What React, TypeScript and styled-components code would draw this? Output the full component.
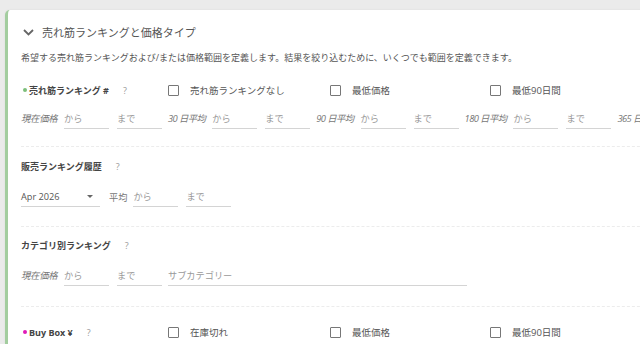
import styled, { createGlobalStyle } from 'styled-components';

const GlobalStyle = createGlobalStyle`
  html, body {
    margin: 0;
    padding: 0;
    background: #ebebeb;
    overflow: hidden;
    font-family: "Open Sans", "Noto Sans CJK JP", sans-serif;
  }
`;

const Page = styled.div`
  padding: 10px 0 0 5px;
  height: 334px;
`;

const Card = styled.div`
  width: 720px;
  height: 100%;
  background: #fff;
  border-left: 3px solid #a3cd9f;
  border-top-left-radius: 5px;
  box-shadow: 0 0 2px rgba(0, 0, 0, 0.08);
  padding-left: 13px;
  box-sizing: border-box;
`;

const Header = styled.div`
  display: flex;
  align-items: center;
  height: 36px;
  padding-top: 4px;
  box-sizing: content-box;
  gap: 8px;
  padding-left: 2px;
`;

const Title = styled.div`
  font-size: 11px;
  color: #555;
`;

const Description = styled.div`
  margin-top: 1px;
  font-size: 9px;
  line-height: 14px;
  color: #555;
`;

const Section = styled.div<{ $top: number; $bottom?: number; $line?: boolean }>`
  padding: ${p => p.$top}px 0 ${p => p.$bottom ?? 0}px;
  border-bottom: ${p => (p.$line ? '1px dashed #ececec' : 'none')};
`;

const FieldHeader = styled.div`
  display: flex;
  align-items: center;
  height: 20px;
`;

const LabelCol = styled.div`
  width: 147px;
  display: flex;
  align-items: center;
`;

const Dot = styled.span<{ $color: string }>`
  width: 4px;
  height: 4px;
  border-radius: 50%;
  background: ${p => p.$color};
  margin: 0 2px 0 2px;
`;

const FieldLabel = styled.span`
  font-size: 9px;
  font-weight: 700;
  color: #444;
`;

const Help = styled.span`
  font-size: 9px;
  color: #999;
  margin-left: 14px;
`;

const CheckGrid = styled.div`
  display: grid;
  grid-template-columns: 162px 160px 161px;
`;

const CheckItem = styled.label`
  display: flex;
  align-items: center;
  gap: 11px;
  font-size: 9.5px;
  color: #555;
`;

const Box = styled.span`
  width: 9px;
  height: 9px;
  border: 1.5px solid #777;
  border-radius: 1px;
`;

const InputRow = styled.div<{ $mt: number }>`
  display: flex;
  align-items: center;
  gap: 6px;
  margin-top: ${p => p.$mt}px;
  white-space: nowrap;
`;

const RowLabel = styled.span`
  font-size: 9.4px;
  font-style: italic;
  color: #777;
  letter-spacing: -0.6px;
  padding: 0 1px 1px 0;
`;

const LeadLabel = styled(RowLabel)`
  width: 36px;
  letter-spacing: -0.3px;
`;

const Field = styled.div<{ $w: number }>`
  width: ${p => p.$w}px;
  height: 20px;
  border-bottom: 1px solid #d4d4d4;
  display: flex;
  align-items: center;
  flex-shrink: 0;
  font-size: 9.2px;
  color: #9a9a9a;
`;

const Pair = styled.div`
  display: flex;
  gap: 8px;
`;

const Select = styled(Field)`
  color: #555;
  justify-content: space-between;
  padding-right: 7px;
  box-sizing: border-box;
  margin-right: 3px;
`;

const Caret = styled.span`
  width: 0;
  height: 0;
  border-left: 3px solid transparent;
  border-right: 3px solid transparent;
  border-top: 3px solid #666;
  margin-top: 1px;
`;

const Plain = styled.span`
  font-size: 9.2px;
  color: #777;
`;

function Range() {
  return (
    <Pair>
      <Field $w={45}>から</Field>
      <Field $w={45}>まで</Field>
    </Pair>
  );
}

function Checks({ items }: { items: string[] }) {
  return (
    <CheckGrid>
      {items.map(t => (
        <CheckItem key={t}>
          <Box />
          {t}
        </CheckItem>
      ))}
    </CheckGrid>
  );
}

export default function App() {
  return (
    <>
      <GlobalStyle />
      <Page>
        <Card>
          <Header>
            <svg width="11" height="7" viewBox="0 0 11 7">
              <path d="M1 1 L5.5 5.5 L10 1" stroke="#666" strokeWidth="1.8" fill="none" />
            </svg>
            <Title>売れ筋ランキングと価格タイプ</Title>
          </Header>
          <Description>
            希望する売れ筋ランキングおよび/または価格範囲を定義します。結果を絞り込むために、いくつでも範囲を定義できます。
          </Description>

          <Section $top={15} $bottom={17} $line>
            <FieldHeader>
              <LabelCol>
                <Dot $color="#7cbf7a" />
                <FieldLabel>売れ筋ランキング #</FieldLabel>
                <Help>?</Help>
              </LabelCol>
              <Checks items={['売れ筋ランキングなし', '最低価格', '最低90日間']} />
            </FieldHeader>
            <InputRow $mt={8}>
              <LeadLabel>現在価格</LeadLabel>
              <Range />
              <RowLabel>30 日平均</RowLabel>
              <Range />
              <RowLabel>90 日平均</RowLabel>
              <Range />
              <RowLabel>180 日平均</RowLabel>
              <Range />
              <RowLabel>365 日平均</RowLabel>
            </InputRow>
          </Section>

          <Section $top={9} $bottom={19} $line>
            <FieldHeader>
              <FieldLabel>販売ランキング履歴</FieldLabel>
              <Help>?</Help>
            </FieldHeader>
            <InputRow $mt={10}>
              <Select $w={79}>
                Apr 2026
                <Caret />
              </Select>
              <Plain>平均</Plain>
              <Range />
            </InputRow>
          </Section>

          <Section $top={8} $bottom={20} $line>
            <FieldHeader>
              <FieldLabel>カテゴリ別ランキング</FieldLabel>
              <Help>?</Help>
            </FieldHeader>
            <InputRow $mt={10}>
              <LeadLabel>現在価格</LeadLabel>
              <Range />
              <Field $w={299}>サブカテゴリー</Field>
            </InputRow>
          </Section>

          <Section $top={15}>
            <FieldHeader>
              <LabelCol>
                <Dot $color="#e01ab8" />
                <FieldLabel>Buy Box ¥</FieldLabel>
                <Help>?</Help>
              </LabelCol>
              <Checks items={['在庫切れ', '最低価格', '最低90日間']} />
            </FieldHeader>
          </Section>
        </Card>
      </Page>
    </>
  );
}
